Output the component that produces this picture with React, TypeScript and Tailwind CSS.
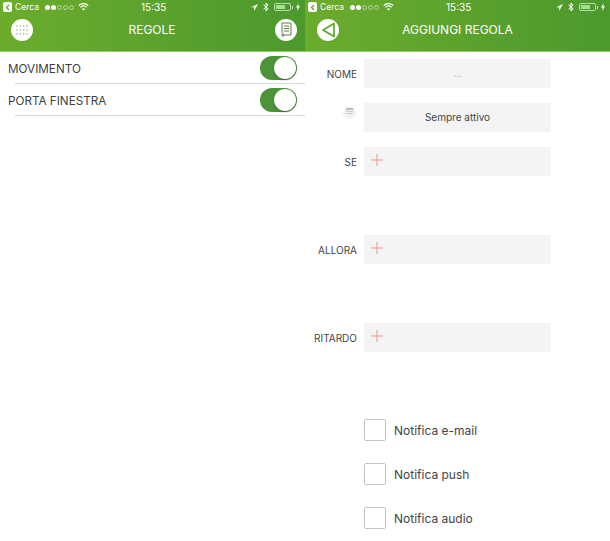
import React from "react";

const font = { fontFamily: '"Helvetica Neue", Inter, sans-serif' };

const StatusBar: React.FC = () => (
  <div className="flex h-[14px] items-center pl-[3px] pr-[5px] text-white">
    <div className="flex w-[113px] items-center">
      <span className="mr-[3px] flex h-[10px] w-[9px] items-center justify-center rounded-[2px] bg-white">
        <svg width="5" height="7" viewBox="0 0 5 7">
          <path d="M4 1 1.5 3.5 4 6" fill="none" stroke="#5fa52d" strokeWidth="1.3" />
        </svg>
      </span>
      <span className="text-[8.5px] leading-none">Cerca</span>
      <span className="ml-[6px] flex items-center gap-[1px]">
        <span className="h-[5px] w-[5px] rounded-full bg-white" />
        <span className="h-[5px] w-[5px] rounded-full bg-white" />
        <span className="h-[5px] w-[5px] rounded-full border border-white/50" />
        <span className="h-[5px] w-[5px] rounded-full border border-white/50" />
        <span className="h-[5px] w-[5px] rounded-full border border-white/50" />
      </span>
      <svg className="ml-[4px]" width="11" height="8" viewBox="0 0 11 8" fill="none" stroke="white" strokeWidth="1.2">
        <path d="M.7 2.6a7 7 0 0 1 9.6 0" />
        <path d="M2.4 4.3a4.6 4.6 0 0 1 6.2 0" />
        <path d="M5.5 7.6 4 6a2.2 2.2 0 0 1 3 0Z" fill="white" stroke="none" />
      </svg>
    </div>
    <span className="w-[70px] pl-[25px] text-[10px] leading-none">15:35</span>
    <div className="ml-auto flex items-center">
      <svg width="7" height="7" viewBox="0 0 7 7">
        <path d="M7 0 0 3.2h3.2V7Z" fill="white" />
      </svg>
      <svg className="ml-[5px]" width="6" height="10" viewBox="0 0 6 10" fill="none" stroke="white" strokeWidth="1">
        <path d="M.5 2.7 5 6.8 3 9V1l2 2.2L.5 7.3" />
      </svg>
      <span className="ml-[5px] flex h-[8px] w-[17px] items-stretch rounded-[2px] border border-white/60 p-[1px]">
        <span className="w-[9px] bg-[#a3e28a]" />
      </span>
      <span className="ml-[1px] h-[3px] w-[1px] bg-white/70" />
      <svg className="ml-[3px]" width="4" height="8" viewBox="0 0 4 8">
        <path d="M2.6 0 0 4.6h1.6L1.2 8 4 3.2H2.3Z" fill="white" />
      </svg>
    </div>
  </div>
);

const Header: React.FC<{ title: string; left: React.ReactNode; right?: React.ReactNode; pad: string }> = ({
  title,
  left,
  right,
  pad,
}) => (
  <div className="h-[52px] border-b border-[#8fce5f] bg-gradient-to-r from-[#6bac2c] to-[#4c992e]">
    <StatusBar />
    <div className={`mt-[1px] flex h-[30px] items-center justify-between pr-[8px] ${pad}`}>
      <span className="flex h-[22px] w-[22px] items-center justify-center rounded-full bg-white">{left}</span>
      <span className="mr-[4px] pb-[1px] text-[12px] text-white">{title}</span>
      <span className="flex h-[22px] w-[22px] items-center justify-center rounded-full">{right}</span>
    </div>
  </div>
);

const Toggle: React.FC = () => (
  <div className="flex h-[24px] w-[37px] justify-end rounded-full bg-[#4c9438]">
    <span className="m-[1px] h-[22px] w-[22px] rounded-full bg-white shadow-[0_1px_2px_rgba(0,0,0,0.35)]" />
  </div>
);

const Rule: React.FC<{ name: string }> = ({ name }) => (
  <div className="ml-[15px] flex h-[32px] items-center border-b border-[#dcdcdc] pr-[8px]">
    <span className="ml-[-7px] flex-1 pt-[4px] text-[11.7px] text-[#3f3f3f]">{name}</span>
    <Toggle />
  </div>
);

const Plus: React.FC = () => (
  <svg className="ml-[7px] translate-y-[7px]" width="12" height="12" viewBox="0 0 12 12" stroke="#eb9a7c" strokeWidth="1">
    <path d="M6 0v12M0 6h12" />
  </svg>
);

const Field: React.FC<{ label?: React.ReactNode; className?: string; children?: React.ReactNode }> = ({
  label,
  className,
  children,
}) => (
  <div className={`flex items-start ${className ?? ""}`}>
    <div className="flex h-[29px] w-[52px] items-center justify-end whitespace-nowrap pt-[2px] text-[10px] text-[#444]">
      {label}
    </div>
    <div className="ml-[7px] h-[29px] w-[187px] bg-[#f4f4f4]">{children}</div>
  </div>
);

const Check: React.FC<{ label: string }> = ({ label }) => (
  <div className="flex h-[22px] items-center">
    <span className="h-[22px] w-[22px] rounded-[2px] border border-[#c4c4c4] bg-white" />
    <span className="ml-[8px] pt-[2px] text-[12px] text-[#444]">{label}</span>
  </div>
);

export default function App() {
  return (
    <div className="flex h-[541px] w-[610px] overflow-hidden bg-white" style={font}>
      <div className="w-[305px]">
        <Header
          title="REGOLE"
          pad="pl-[11px]"
          left={
            <svg width="14" height="14" viewBox="0 0 14 14" fill="#a3ab8c">
              {[2, 5.3, 8.7, 12].flatMap((x) =>
                [3, 7, 11].map((y) => <circle key={`${x}-${y}`} cx={x} cy={y} r="0.8" />)
              )}
            </svg>
          }
          right={
            <span className="flex h-[22px] w-[22px] items-center justify-center rounded-full bg-white">
              <svg width="14" height="16" viewBox="0 0 14 16" fill="none" stroke="#5d7a4c" strokeWidth="1">
                <path d="M3 11V1h9v12H6" />
                <path d="M5 4h5M5 6.5h5M5 9h5" />
                <path d="M4 11v4M2 13h4" />
              </svg>
            </span>
          }
        />
        <Rule name="MOVIMENTO" />
        <Rule name="PORTA FINESTRA" />
      </div>
      <div className="w-[305px]">
        <Header
          title="AGGIUNGI REGOLA"
          pad="pl-[12px]"
          left={
            <svg width="15" height="16" viewBox="0 0 15 16" fill="none" stroke="#5fa52d" strokeWidth="1.7">
              <path d="M13 1.5v13L2 8Z" strokeLinejoin="round" />
            </svg>
          }
        />
        <div className="pt-[7px]">
          <Field label="NOME">
            <div className="flex h-full items-center justify-center text-[10px] text-[#aaa]">...</div>
          </Field>
          <Field
            className="mt-[15px]"
            label={
              <span className="mb-[13px] mr-[1px] flex h-[13px] w-[13px] flex-col gap-[1px] rounded-full bg-[#f2f2f2] px-[3px] pt-[2px]">
                <span className="h-[2px] bg-[#bbb]" />
                <span className="h-[1px] bg-[#ccc]" />
                <span className="h-[1px] bg-[#ccc]" />
              </span>
            }
          >
            <div className="flex h-full items-center justify-center text-[10px] text-[#444]">Sempre attivo</div>
          </Field>
          <Field className="mt-[15px]" label="SE">
            <Plus />
          </Field>
          <Field className="mt-[59px]" label="ALLORA">
            <Plus />
          </Field>
          <Field className="mt-[59px]" label="RITARDO">
            <Plus />
          </Field>
          <div className="ml-[59px] mt-[67px] flex flex-col gap-[22px]">
            <Check label="Notifica e-mail" />
            <Check label="Notifica push" />
            <Check label="Notifica audio" />
          </div>
        </div>
      </div>
    </div>
  );
}
